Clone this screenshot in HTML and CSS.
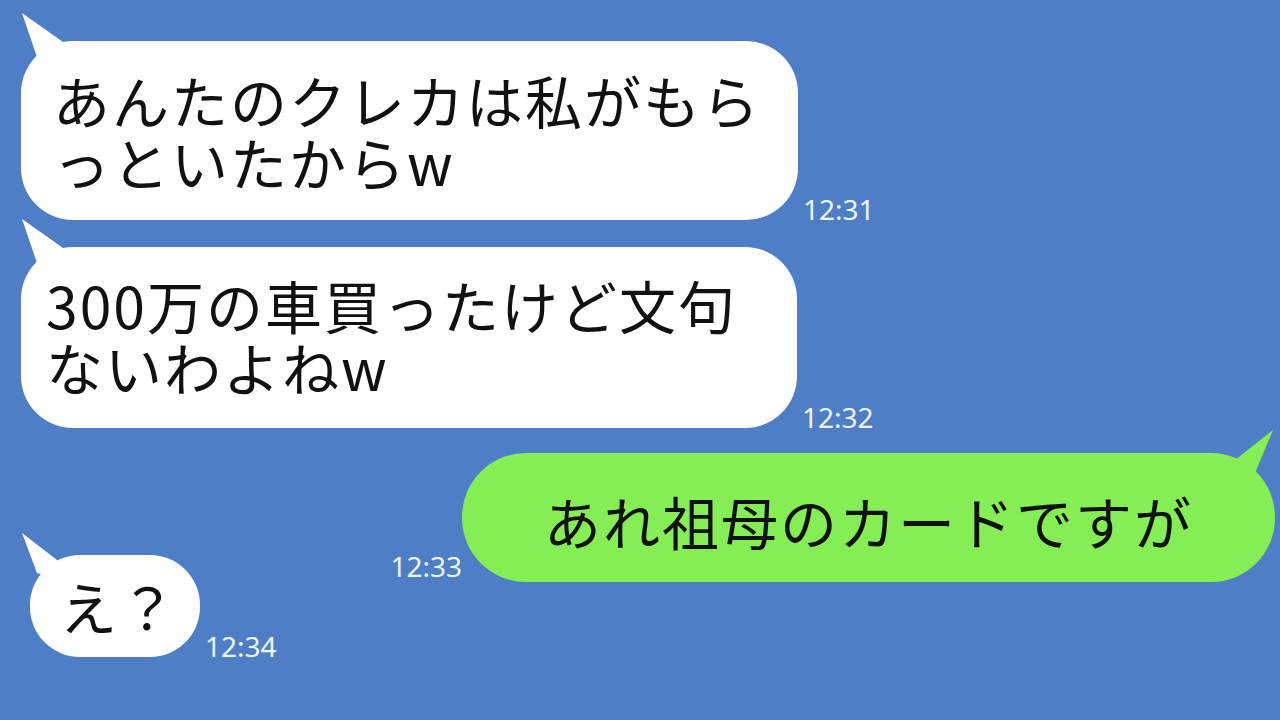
FILE: index.html
```html
<!DOCTYPE html>
<html lang="ja">
<head>
  <meta charset="UTF-8" />
  <meta name="viewport" content="width=device-width, initial-scale=1" />
  <title>トーク</title>
  <link rel="stylesheet" href="styles.css">
</head>
<body>
  <div class="chat">
    <div class="row left r1">
      <div class="bubble white b1">
        <svg class="tail" width="50" height="60" viewBox="0 0 50 60"><polygon points="1,2 17,49 45,55 42,31" /></svg>
        あんたのクレカは私がもら<br>っといたからw
      </div>
      <span class="time">12:31</span>
    </div>

    <div class="row left r2">
      <div class="bubble white b2">
        <svg class="tail" width="50" height="60" viewBox="0 0 50 60"><polygon points="1,2 17,49 45,55 42,31" /></svg>
        300万の車買ったけど文句<br>ないわよねw
      </div>
      <span class="time">12:32</span>
    </div>

    <div class="row right r3">
      <span class="time">12:33</span>
      <div class="bubble green b3">
        <svg class="tail" width="50" height="60" viewBox="0 0 50 60"><polygon points="48,7 10,37 5,58 30,50" /></svg>
        あれ祖母のカードですが
      </div>
    </div>

    <div class="row left r4">
      <div class="bubble white b4">
        <svg class="tail" width="50" height="60" viewBox="0 0 50 60"><polygon points="1,3 16,43 40,50 36,30" /></svg>
        え？
      </div>
      <span class="time">12:34</span>
    </div>
  </div>
</body>
</html>
```

FILE: styles.css
```css
:root {
  --fondo: #4e7ec5;
  --verde: #86ee55;
  --hora: #eef6ff;
}
* {
  margin: 0;
  padding: 0;
  box-sizing: border-box;
}
html, body {
  width: 1280px;
  height: 720px;
  overflow: hidden;
  background-color: var(--fondo);
  font-family: "Noto Sans CJK JP", "Noto Sans", sans-serif;
  color: #111;
}

.chat {
  display: flex;
  flex-direction: column;
  padding-top: 41px;
}
.row {
  display: flex;
  align-items: flex-end;
}
.row.left {
  padding-left: 21px;
}
.row.right {
  justify-content: flex-end;
  padding-right: 5px;
}

.bubble {
  position: relative;
  font-size: 57px;
  letter-spacing: 2px;
  line-height: 62px;
  white-space: nowrap;
}
.bubble.white {
  background: white;
}
.bubble.white .tail {
  fill: white;
}
.bubble.green {
  background: var(--verde);
}
.bubble.green .tail {
  fill: var(--verde);
}
.tail {
  position: absolute;
  top: -30px;
  left: 0;
}

.b1 {
  width: 777px;
  height: 179px;
  border-radius: 52px;
  padding: 27px 0 0 32px;
}
.r2 {
  margin-top: 27px;
}
.b2 {
  width: 776px;
  height: 181px;
  border-radius: 52px;
  padding: 26px 0 0 25px;
}
.r3 {
  margin-top: 25px;
}
.b3 {
  width: 813px;
  height: 129px;
  border-radius: 64px;
  padding: 36px 0 0 82px;
}
.b3 .tail {
  left: auto;
  right: 0;
}
.r4 {
  margin-top: -27px;
  padding-left: 30px !important;
}
.b4 {
  width: 170px;
  height: 102px;
  border-radius: 50px;
  padding: 19px 0 0 30px;
}
.b4 .tail {
  left: -9px;
  top: -25px;
}

.time {
  font-family: "Noto Sans", sans-serif;
  font-size: 28px;
  line-height: 28px;
  color: var(--hora);
  margin: 0 0 -3px 5px;
}
.row.right .time {
  margin: 0 0 2px 0;
}
```
